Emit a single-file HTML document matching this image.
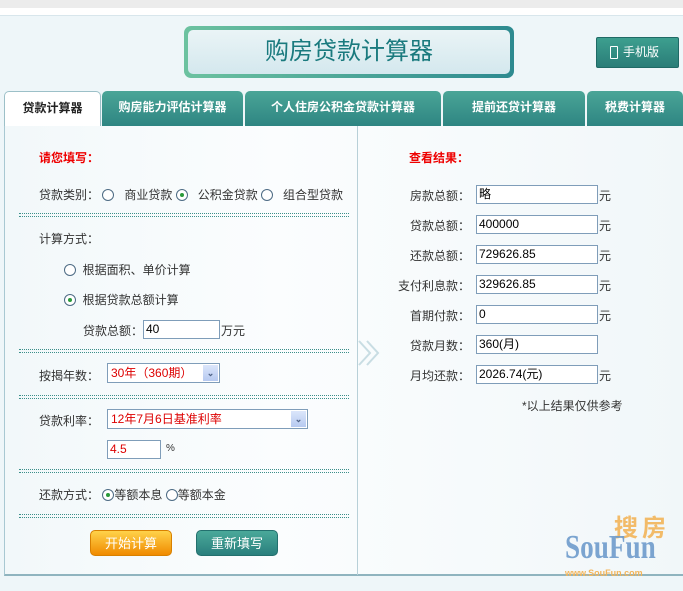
<!DOCTYPE html>
<html><head><meta charset="utf-8"><style>
*{margin:0;padding:0;box-sizing:border-box}
body{width:683px;height:591px;overflow:hidden;background:#eef6f9;font-family:"Liberation Sans","Noto Sans CJK SC",sans-serif;font-size:12px;color:#333;position:relative}
.a{position:absolute;white-space:nowrap}
.top{left:0;top:0;width:683px;height:8px;background:#ececec}
.wh{left:0;top:8px;width:683px;height:8px;background:#fff;border-bottom:1px solid #d8e6ec}
.title{left:184px;top:26px;width:330px;height:52px;border-radius:7px;background:linear-gradient(90deg,#6cc2a0,#2d8a90);padding:4px}
.title div{width:100%;height:100%;border-radius:5px;background:linear-gradient(#eaf4f6,#d4e8ee);color:#1a7a7e;font-size:24px;text-align:center;line-height:43px}
.phone{left:596px;top:37px;width:83px;height:31px;background:linear-gradient(#3d9f8f,#2a7d78);border:1px solid #1f6a66;border-radius:2px;color:#fff;font-size:12px;line-height:29px;padding-left:26px}
.tab{top:91px;height:35px;background:linear-gradient(#4aa597,#2e8582);color:#fff;font-weight:bold;text-align:center;line-height:33px;border-radius:5px 5px 0 0;font-size:12px}
.panel{left:4px;top:125px;width:679px;height:451px;background:linear-gradient(90deg,#f2f8fa,#fbfdfe 40%,#f1f7f9);border-left:1px solid #a8c8d2;border-bottom:2px solid #8fb4bf}
.div{left:357px;top:125px;width:1px;height:450px;background:#b8d0d8}
.dot{left:19px;width:330px;height:4px;border-top:1px dotted #3b8f8a;border-bottom:1px dotted #3b8f8a}
.red{color:#e00;font-weight:bold}
.rad{display:inline-block;width:12px;height:12px;border:1px solid #4d6b84;border-radius:50%;background:#fff;vertical-align:-2px;position:relative}
.rad.on:after{content:"";position:absolute;left:3px;top:3px;width:4px;height:4px;border-radius:50%;background:#2a9a3a}
.in{height:19px;border:1px solid #7f9db9;background:#fff;font-size:12px;line-height:17px;padding-left:2px;color:#000}
.sel{height:20px;border:1px solid #7f9db9;background:#fff;color:#d00;line-height:18px;padding-left:3px}
.sel b{position:absolute;right:1px;top:1px;width:15px;height:16px;background:linear-gradient(#dbe6fb,#b6c9f0);color:#4d6185;font-size:9px;text-align:center;line-height:16px}
.lab{width:80px;text-align:right;left:390px}
.btn{top:530px;width:82px;height:26px;border-radius:5px;color:#fff;text-align:center;line-height:25px;font-size:13px}
</style></head><body>
<div class="a top"></div><div class="a wh"></div>
<div class="a title"><div>购房贷款计算器</div></div>
<div class="a phone"><span style="position:absolute;left:13px;top:8px;width:8px;height:13px;border:1.5px solid #fff;border-radius:1px"></span>手机版</div>
<div class="a panel"></div><div class="a div"></div>
<div class="a tab" style="left:4px;width:97px;background:#fff;color:#222;border:1px solid #9cc0c8;border-bottom:none">贷款计算器</div>
<div class="a tab" style="left:102px;width:141px">购房能力评估计算器</div>
<div class="a tab" style="left:245px;width:196px">个人住房公积金贷款计算器</div>
<div class="a tab" style="left:443px;width:142px">提前还贷计算器</div>
<div class="a tab" style="left:587px;width:96px">税费计算器</div>
<svg class="a" style="left:357px;top:338px" width="30" height="30"><path d="M2 3l11 12-11 12M10 3l11 12-11 12" fill="none" stroke="#c8dde3" stroke-width="2"/></svg>

<div class="a red" style="left:39px;top:149px">请您填写：</div>
<div class="a" style="left:39px;top:186px">贷款类别： <span class="rad"></span>&nbsp;&nbsp; 商业贷款 <span class="rad on"></span>&nbsp;&nbsp; 公积金贷款 <span class="rad"></span>&nbsp;&nbsp; 组合型贷款</div>
<div class="a dot" style="top:213px"></div>
<div class="a" style="left:39px;top:230px">计算方式：</div>
<div class="a" style="left:64px;top:261px"><span class="rad"></span>&nbsp; 根据面积、单价计算</div>
<div class="a" style="left:64px;top:291px"><span class="rad on"></span>&nbsp; 根据贷款总额计算</div>
<div class="a" style="left:83px;top:322px">贷款总额：</div>
<div class="a in" style="left:143px;top:320px;width:77px">40</div>
<div class="a" style="left:221px;top:322px">万元</div>
<div class="a dot" style="top:349px"></div>
<div class="a" style="left:39px;top:367px">按揭年数：</div>
<div class="a sel" style="left:107px;top:363px;width:113px">30年（360期）<b>⌄</b></div>
<div class="a dot" style="top:395px"></div>
<div class="a" style="left:39px;top:412px">贷款利率：</div>
<div class="a sel" style="left:107px;top:409px;width:201px">12年7月6日基准利率<b>⌄</b></div>
<div class="a in" style="left:107px;top:440px;width:54px;color:#d00">4.5</div>
<div class="a" style="left:166px;top:443px;font-size:10px">%</div>
<div class="a dot" style="top:469px"></div>
<div class="a" style="left:39px;top:486px">还款方式： <span class="rad on"></span>等额本息 <span class="rad"></span>等额本金</div>
<div class="a dot" style="top:514px"></div>
<div class="a btn" style="left:90px;background:linear-gradient(#ffd24a,#f08a00);border:1px solid #d88000">开始计算</div>
<div class="a btn" style="left:196px;background:linear-gradient(#4aa99a,#2a7f7d);border:1px solid #23706e">重新填写</div>

<div class="a red" style="left:409px;top:149px">查看结果：</div>
<div class="a lab" style="top:187px">房款总额：</div><div class="a in" style="left:476px;top:185px;width:122px">略</div><div class="a" style="left:599px;top:187px">元</div>
<div class="a lab" style="top:217px">贷款总额：</div><div class="a in" style="left:476px;top:215px;width:122px">400000</div><div class="a" style="left:599px;top:217px">元</div>
<div class="a lab" style="top:247px">还款总额：</div><div class="a in" style="left:476px;top:245px;width:122px">729626.85</div><div class="a" style="left:599px;top:247px">元</div>
<div class="a lab" style="top:277px">支付利息款：</div><div class="a in" style="left:476px;top:275px;width:122px">329626.85</div><div class="a" style="left:599px;top:277px">元</div>
<div class="a lab" style="top:307px">首期付款：</div><div class="a in" style="left:476px;top:305px;width:122px">0</div><div class="a" style="left:599px;top:307px">元</div>
<div class="a lab" style="top:337px">贷款月数：</div><div class="a in" style="left:476px;top:335px;width:122px">360(月)</div>
<div class="a lab" style="top:367px">月均还款：</div><div class="a in" style="left:476px;top:365px;width:122px">2026.74(元)</div><div class="a" style="left:599px;top:367px">元</div>
<div class="a" style="left:522px;top:397px">*以上结果仅供参考</div>

<div class="a" style="left:614px;top:516px;font-size:24px;line-height:26px;font-weight:bold;color:#f3b55a;opacity:.9;letter-spacing:4px">搜房</div>
<div class="a" style="left:565px;top:530px;font-size:34px;line-height:36px;font-weight:bold;font-family:'Liberation Serif',serif;color:#6f9ccc;opacity:.9;transform:scaleX(.8);transform-origin:0 0">SouFun</div>
<div class="a" style="left:565px;top:568px;font-size:9px;font-weight:bold;color:#f3b55a">www.SouFun.com</div>
</body></html>
